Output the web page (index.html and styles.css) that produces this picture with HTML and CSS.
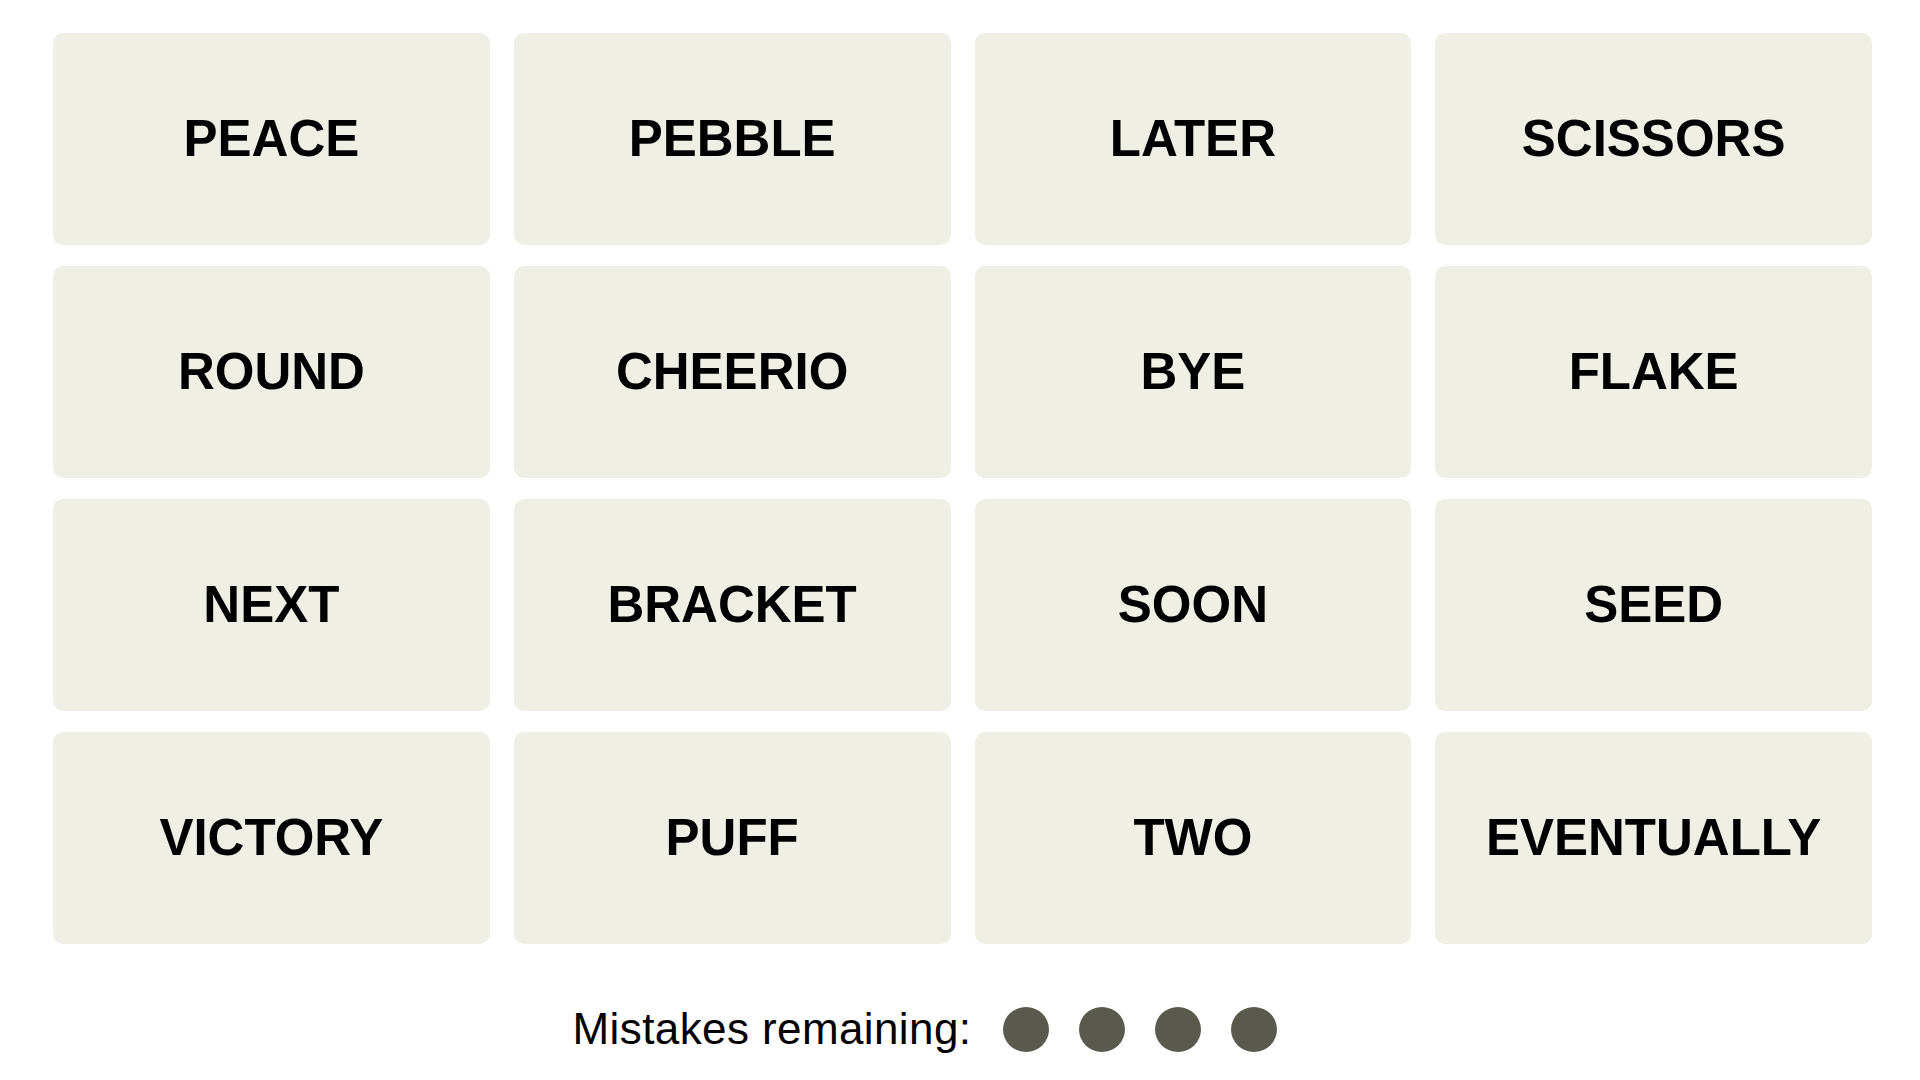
FILE: index.html
```html
<!DOCTYPE html>
<html lang="en">
<head>
<meta charset="utf-8">
<title>Connections</title>
<link rel="stylesheet" href="styles.css">
</head>
<body>
<main class="game">
  <section class="board">
    <div class="tile">PEACE</div>
    <div class="tile">PEBBLE</div>
    <div class="tile">LATER</div>
    <div class="tile">SCISSORS</div>
    <div class="tile">ROUND</div>
    <div class="tile">CHEERIO</div>
    <div class="tile">BYE</div>
    <div class="tile">FLAKE</div>
    <div class="tile">NEXT</div>
    <div class="tile">BRACKET</div>
    <div class="tile">SOON</div>
    <div class="tile">SEED</div>
    <div class="tile">VICTORY</div>
    <div class="tile">PUFF</div>
    <div class="tile">TWO</div>
    <div class="tile">EVENTUALLY</div>
  </section>
  <section class="mistakes">
    <span class="mistakes-label">Mistakes remaining:</span>
    <span class="dots">
      <span class="dot"></span>
      <span class="dot"></span>
      <span class="dot"></span>
      <span class="dot"></span>
    </span>
  </section>
</main>
</body>
</html>
```

FILE: styles.css
```css
html, body {
  margin: 0;
  padding: 0;
  background: #ffffff;
}

body {
  width: 1920px;
  height: 1080px;
  overflow: hidden;
  font-family: "Liberation Sans", Arial, sans-serif;
  color: #000;
}

.game {
  padding-top: 33px;
  padding-left: 53px;
}

.board {
  width: 1819px;
  display: grid;
  grid-template-columns: repeat(4, 1fr);
  grid-auto-rows: 212px;
  column-gap: 24px;
  row-gap: 21px;
}

.tile {
  background: #efefe6;
  border-radius: 10px;
  display: flex;
  align-items: center;
  justify-content: center;
  font-weight: 700;
  font-size: 51px;
  letter-spacing: 0;
  padding-bottom: 1px;
  box-sizing: border-box;
}

.mistakes {
  margin-left: -53px;
  width: 1920px;
  padding-right: 70px;
  box-sizing: border-box;
  margin-top: 60px;
  display: flex;
  align-items: center;
  justify-content: center;
  gap: 32px;
}

.mistakes-label {
  font-size: 44px;
  letter-spacing: 0.4px;
  color: #000;
}

.dots {
  display: flex;
  gap: 30px;
}

.dot {
  width: 46px;
  height: 45px;
  border-radius: 50%;
  background: #5a594e;
}
```
